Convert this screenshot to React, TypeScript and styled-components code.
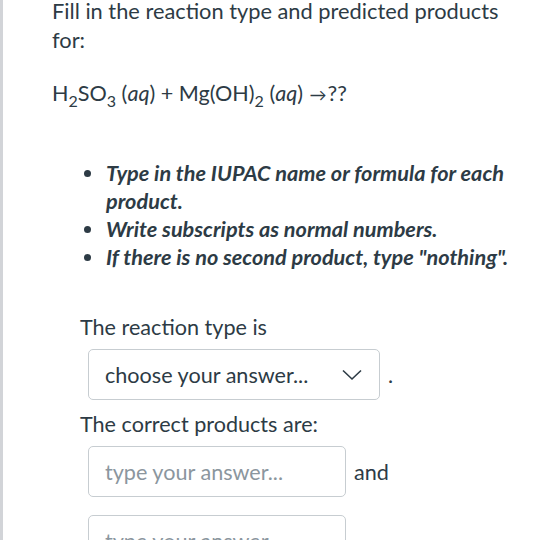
import React from 'react';
import styled, {createGlobalStyle} from 'styled-components';

const GlobalStyle = createGlobalStyle`
    html, body {
        margin: 0;
        padding: 0;
        background: #fff;
    }
    body {
        font-family: Lato, "Open Sans", sans-serif;
        color: #2d3b45;
        overflow: hidden;
    }
`;

const Page = styled.div`
    border-left: 3px solid #d2d4d8;
    min-height: 540px;
    padding: 0 20px 0 49px;
    box-sizing: border-box;
`;

const Title = styled.p`
    margin: -4px 0 0;
    font-size: 21.8px;
    line-height: 29px;
`;

const Equation = styled.p`
    margin: 25px 0 0;
    font-size: 21.6px;
    line-height: 29px;
    white-space: nowrap;

    sub {
        font-size: 16px;
        vertical-align: -6px;
        line-height: 0;
    }

    i {
        font-style: italic;
    }
`;

const Arrow = styled.span`
    font-size: 17px;
    margin: 0 1px;
`;

const Hints = styled.ul`
    margin: 50px 0 0;
    padding-left: 53px;
    list-style: disc;
`;

const Hint = styled.li`
    font-size: 21.7px;
    line-height: 28px;
    font-style: italic;
    font-weight: 700;
    padding-left: 1px;
`;

const Answers = styled.div`
    margin-top: 42px;
    padding-left: 28px;
`;

const Label = styled.p`
    margin: 0;
    font-size: 21.6px;
    line-height: 28px;
`;

const Row = styled.div`
    display: flex;
    align-items: center;
    gap: 4px;
    margin: 8px 0 10px 8px;

    & + & {
        margin-top: 18px;
    }
`;

const SelectBox = styled.div`
    width: 292px;
    height: 51px;
    box-sizing: border-box;
    border: 1px solid #c7cdd1;
    border-radius: 5px;
    display: flex;
    align-items: center;
    justify-content: space-between;
    padding: 0 17px 0 16px;
    font-size: 21.6px;
    color: #2d3b45;
`;

const InputBox = styled.div`
    width: 258px;
    height: 51px;
    box-sizing: border-box;
    border: 1px solid #c7cdd1;
    border-radius: 5px;
    display: flex;
    align-items: center;
    padding: 0 16px;
    font-size: 21.6px;
    color: #8b969e;
    white-space: nowrap;
`;

const After = styled.span`
    font-size: 21.6px;
    margin-left: 4px;
`;

const Chevron = () => (
    <svg width="20" height="12" viewBox="0 0 20 12" fill="none">
        <path d="M1 1.5 L10 10 L19 1.5" stroke="#2d3b45" strokeWidth="1.6"/>
    </svg>
);

export default function App() {
    return (
        <Page>
            <GlobalStyle/>
            <Title>Fill in the reaction type and predicted products for:</Title>
            <Equation>
                H<sub>2</sub>SO<sub>3</sub> (<i>aq</i>) + Mg(OH)<sub>2</sub> (<i>aq</i>) <Arrow>→</Arrow>??
            </Equation>
            <Hints>
                <Hint>Type in the IUPAC name or formula for each product.</Hint>
                <Hint>Write subscripts as normal numbers.</Hint>
                <Hint>If there is no second product, type "nothing".</Hint>
            </Hints>
            <Answers>
                <Label>The reaction type is</Label>
                <Row>
                    <SelectBox>
                        <span>choose your answer...</span>
                        <Chevron/>
                    </SelectBox>
                    <After>.</After>
                </Row>
                <Label>The correct products are:</Label>
                <Row>
                    <InputBox>type your answer...</InputBox>
                    <After>and</After>
                </Row>
                <Row>
                    <InputBox>type your answer...</InputBox>
                </Row>
            </Answers>
        </Page>
    );
}
